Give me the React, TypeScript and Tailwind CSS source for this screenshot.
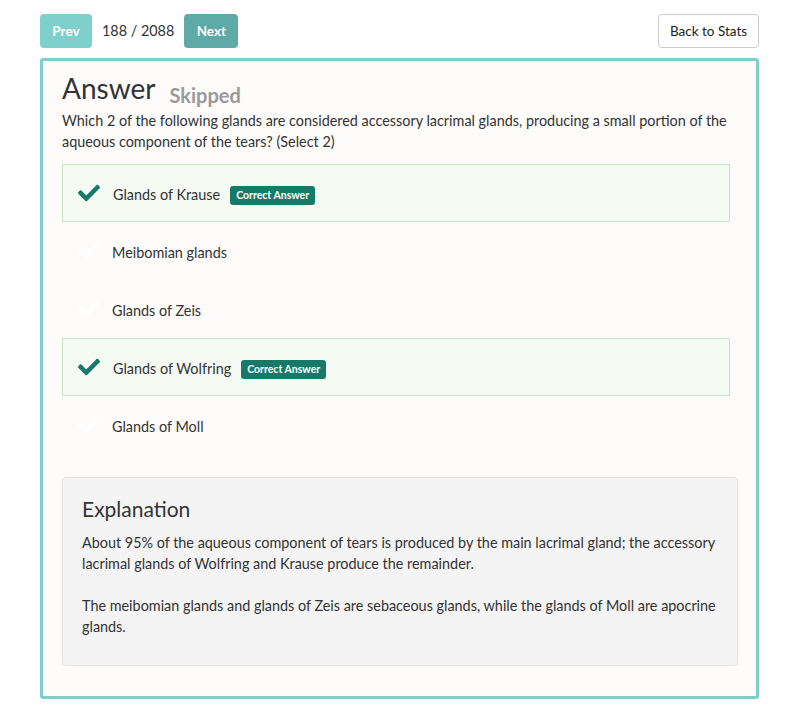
import React from "react";

type Option = { label: string; correct: boolean };

const options: Option[] = [
  { label: "Glands of Krause", correct: true },
  { label: "Meibomian glands", correct: false },
  { label: "Glands of Zeis", correct: false },
  { label: "Glands of Wolfring", correct: true },
  { label: "Glands of Moll", correct: false },
];

// ─── Check glyph ──────────────────────────────────────────────────────────────

function Check({ className }: { className: string }) {
  return (
    <svg className={className} viewBox="0 0 512 512" fill="currentColor">
      <path d="M173.9 439.4 7.5 273c-10-10-10-26.2 0-36.2l36.2-36.2c10-10 26.2-10 36.2 0L192 312.7 432.1 72.6c10-10 26.2-10 36.2 0l36.2 36.2c10 10 10 26.2 0 36.2L210.1 439.4c-10 10-26.2 10-36.2 0z" />
    </svg>
  );
}

function OptionRow({ option }: { option: Option }) {
  if (option.correct) {
    return (
      <div className="mr-[8px] h-[58px] flex items-center border border-[#c5e6c1] bg-[#f5faf3]">
        <Check className="w-[22px] h-[22px] ml-[15px] mr-[13px] text-[#167a6a]" />
        <span className="text-[14.4px] text-[#333] translate-y-[2px]">{option.label}</span>
        <span className="ml-[10px] px-[6px] py-[2px] rounded-[3px] bg-[#177a68] text-white text-[10.5px] font-bold leading-[15px] translate-y-[2px]">
          Correct Answer
        </span>
      </div>
    );
  }
  return (
    <div className="mr-[8px] h-[58px] flex items-center border border-transparent">
      <Check className="w-[22px] h-[22px] ml-[15px] mr-[12px] text-white" />
      <span className="text-[14.4px] text-[#333] translate-y-[2px]">{option.label}</span>
    </div>
  );
}

export default function App() {
  return (
    <div className="w-[800px] h-[706px] bg-white font-['Lato','Noto_Sans',sans-serif] text-[#333]">
      <div className="pl-[40px] pr-[41px] pt-[14px]">
        {/* Top nav */}
        <div className="flex items-center h-[34px]">
          <button className="h-[34px] w-[52px] rounded-[4px] bg-[#7fcfcc] text-white text-[13.5px] font-bold">
            Prev
          </button>
          <span className="ml-[10px] text-[14.4px] text-[#333]">188 / 2088</span>
          <button className="ml-[10px] h-[34px] w-[54px] rounded-[4px] bg-[#5eaaa6] text-white text-[13.5px] font-bold">
            Next
          </button>
          <button className="ml-auto h-[34px] w-[101px] rounded-[4px] border border-[#cccccc] bg-white text-[13.5px] text-[#222]">
            Back to Stats
          </button>
        </div>

        {/* Answer panel */}
        <div className="mt-[10px] h-[641px] border-[3px] border-[#7ecfcc] rounded-[3px] bg-[#fdfcfb] pl-[19px] pr-[18px] pt-[9px]">
          <div className="flex items-end">
            <h1 className="text-[28px] leading-[36px] text-[#333]">Answer</h1>
            <span className="ml-[14px] text-[20px] font-bold text-[#9a9a9a] leading-[28px] translate-y-[3px]">
              Skipped
            </span>
          </div>
          <p className="mt-[4px] text-[14.4px] leading-[21px] text-[#333]">
            Which 2 of the following glands are considered accessory lacrimal glands, producing a small portion of the
            aqueous component of the tears? (Select 2)
          </p>

          <div className="mt-[12px] flex flex-col">
            {options.map((o) => (
              <OptionRow key={o.label} option={o} />
            ))}
          </div>

          {/* Explanation */}
          <div className="mt-[23px] h-[189px] rounded-[4px] border border-[#e3e3e3] bg-[#f4f4f4] px-[19px] pt-[17px]">
            <h2 className="text-[21px] leading-[28px] text-[#333]">Explanation</h2>
            <p className="mt-[9px] text-[14.4px] leading-[21px] text-[#333]">
              About 95% of the aqueous component of tears is produced by the main lacrimal gland; the accessory
              lacrimal glands of Wolfring and Krause produce the remainder.
            </p>
            <p className="mt-[21px] text-[14.4px] leading-[21px] text-[#333]">
              The meibomian glands and glands of Zeis are sebaceous glands, while the glands of Moll are apocrine
              glands.
            </p>
          </div>
        </div>
      </div>
    </div>
  );
}
